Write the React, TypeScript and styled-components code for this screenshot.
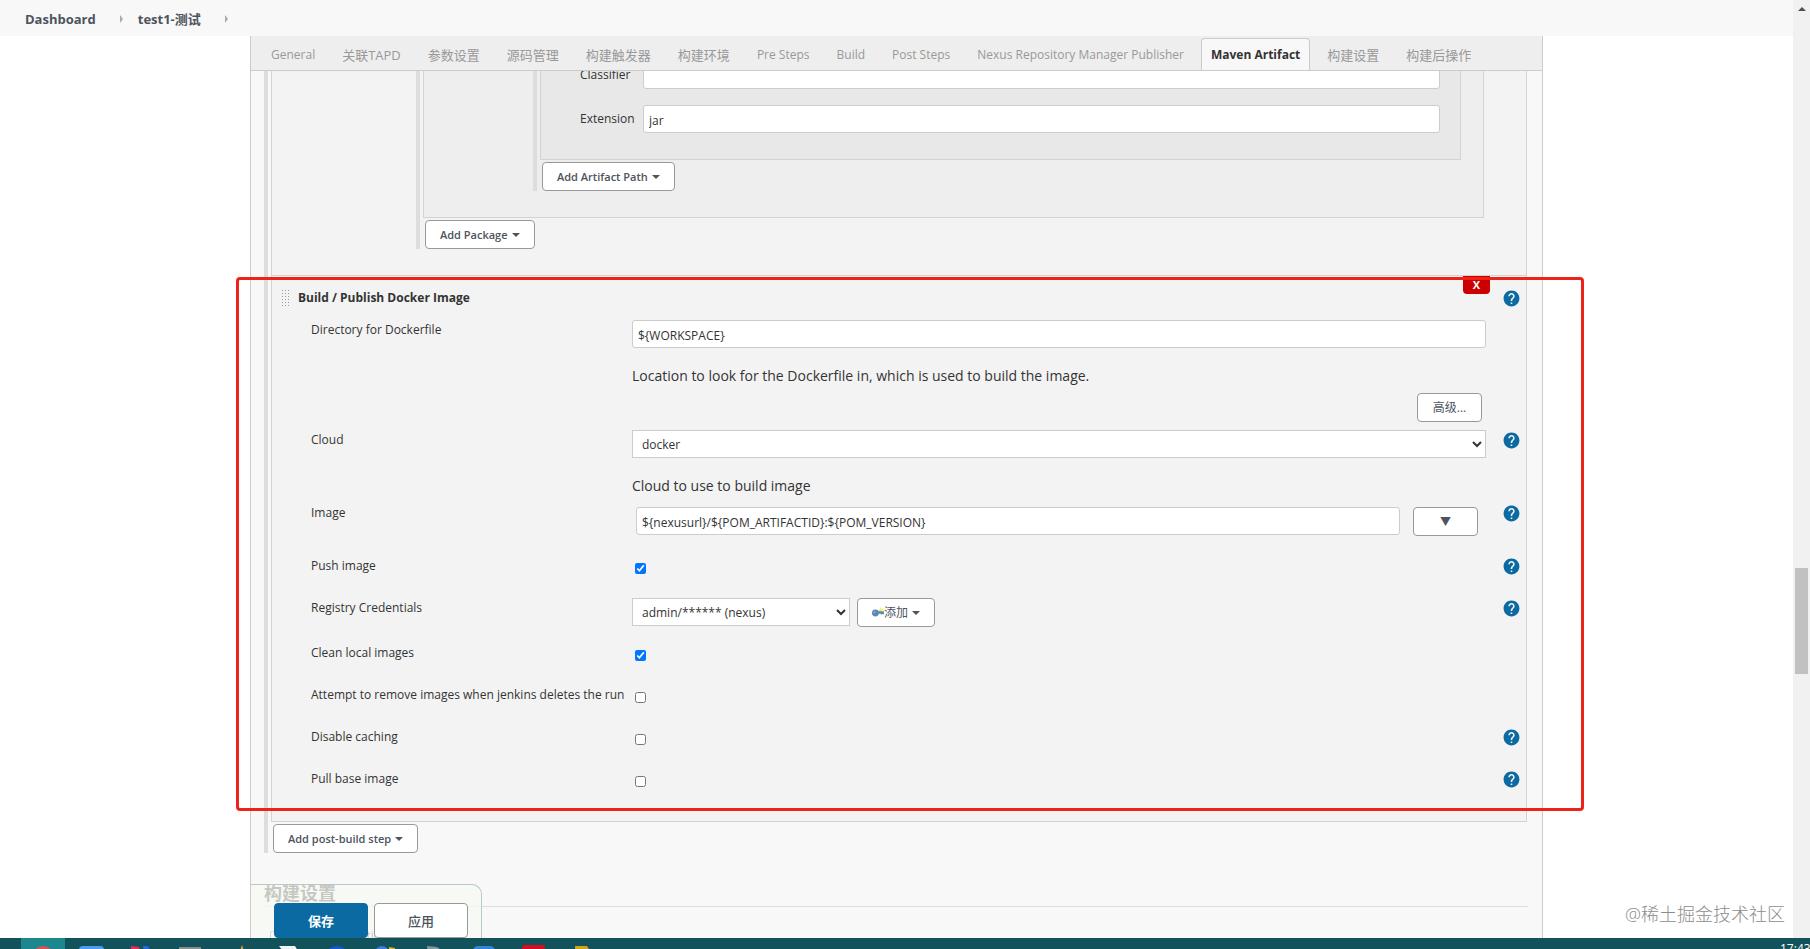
import React from 'react';
import styled, { createGlobalStyle, css } from 'styled-components';
import { MdHelp } from 'react-icons/md';

const GlobalStyle = createGlobalStyle`
  *, *::before, *::after { box-sizing: border-box; }
  body {
    margin: 0;
    background: #fff;
    color: #333;
    font: 12px/20px "Open Sans", "Noto Sans CJK SC", sans-serif;
  }
  button, input, select { font: inherit; color: inherit; }
`;

/* ---------- page frame ---------- */

const Screen = styled.div`
  display: flex;
  flex-direction: column;
  height: 100vh;
  overflow: hidden;
`;

const Browser = styled.div`
  display: flex;
  flex: 1;
  min-height: 0;
`;

const Page = styled.div`
  position: relative;
  display: flex;
  flex-direction: column;
  flex: 1;
  min-width: 0;
  overflow: hidden;
`;

const Breadcrumbs = styled.nav`
  position: relative;
  z-index: 2;
  display: flex;
  flex: none;
  align-items: center;
  height: 36px;
  padding: 2px 25px 0;
  background: #f8f8f8;
  font-size: 13px;
  font-weight: 700;
`;

const Crumb = styled.a`
  color: #4d545d;
  text-decoration: none;
`;

const CrumbArrow = styled.span`
  width: 0;
  margin: 0 15px 0 24px;
  border: solid transparent;
  border-width: 4px 0 4px 3px;
  border-left-color: #aaa;
`;

const ScrollTrack = styled.div`
  display: flex;
  flex: none;
  flex-direction: column;
  align-items: center;
  width: 17px;
  background: #f1f1f1;
`;

const ScrollUp = styled.span`
  margin: 7px 0 6px;
  border: solid transparent;
  border-width: 0 4px 4px;
  border-bottom-color: #505050;
`;

const TrackSpace = styled.div<{ $share: number }>`
  flex: ${(p) => p.$share};
`;

const ScrollThumb = styled.div`
  flex: 106;
  width: 13px;
  background: #c1c1c1;
`;

const Panel = styled.main`
  flex: 1;
  min-height: 0;
  margin: 0 250px;
  border: solid #ccc;
  border-width: 0 1px;
  background: #f8f8f8;
`;

/* ---------- tabs ---------- */

const TabBar = styled.div`
  position: relative;
  z-index: 1;
  display: flex;
  align-items: flex-end;
  gap: 7px;
  height: 35px;
  padding-left: 10px;
  border-bottom: 1px solid #ccc;
  background: #eee;
`;

const Tab = styled.button<{ $active?: boolean; $cjk?: boolean }>`
  height: 32px;
  padding: 0 9px;
  border: 1px solid transparent;
  border-bottom: 0;
  border-radius: 4px 4px 0 0;
  background: none;
  color: #999;
  font-size: ${(p) => (p.$cjk ? 13 : 12)}px;
  white-space: nowrap;
  ${(p) =>
    p.$active &&
    css`
      border-color: #ccc;
      background: #f8f8f8;
      color: #333;
      font-weight: 700;
    `}
`;

/* ---------- nested groups ---------- */

const Form = styled.form`
  margin-top: -10px;
`;

const Group = styled.div<{ $left: number; $right: number }>`
  margin: 0 ${(p) => p.$right}px 0 ${(p) => p.$left}px;
  padding-left: 3px;
  border-left: 4px solid #ddd;
`;

const Box = styled.section<{ $shade: string; $bottom: number }>`
  position: relative;
  padding-bottom: ${(p) => p.$bottom}px;
  border: solid #d3d3d3;
  border-width: 0 1px 1px;
  background: ${(p) => p.$shade};
`;

const AddButtonSlot = styled.div`
  display: flex;
  padding: 2px 0 0 2px;
`;

const Button = styled.button<{ $width?: number; $cjk?: boolean }>`
  display: flex;
  flex: none;
  align-items: center;
  justify-content: center;
  width: ${(p) => (p.$width ? `${p.$width}px` : 'auto')};
  height: 29px;
  padding: 0 14px;
  border: 1px solid #999;
  border-radius: 4px;
  background: #fff;
  color: #4d545d;
  font-size: ${(p) => (p.$cjk ? 12 : 11)}px;
  font-weight: ${(p) => (p.$cjk ? 400 : 600)};
  white-space: nowrap;
`;

const Caret = styled.span`
  margin-left: 4px;
  border: solid transparent;
  border-width: 4px 4px 0;
  border-top-color: currentColor;
`;

/* ---------- fields ---------- */

const fieldBox = css`
  height: 28px;
  border: 1px solid #ccc;
  background: #fff;
`;

const TextInput = styled.input`
  ${fieldBox}
  display: block;
  flex: 1;
  width: 100%;
  min-width: 0;
  padding: 2px 5px 0;
  border-radius: 3px;
`;

const Select = styled.select<{ $width?: number }>`
  ${fieldBox}
  display: block;
  width: ${(p) => (p.$width ? `${p.$width}px` : '100%')};
  padding: 0 5px;
`;

const ArtifactRow = styled.div`
  display: flex;
  align-items: center;
  margin-bottom: 16px;
  padding: 0 20px 0 39px;
`;

const ArtifactLabel = styled.label`
  width: 63px;
`;

const Row = styled.div<{ $height: number }>`
  display: flex;
  align-items: flex-start;
  min-height: ${(p) => p.$height}px;
  padding-left: 39px;
`;

const RowLabel = styled.label`
  flex: none;
  width: 321px;
  white-space: nowrap;
`;

const Control = styled.div`
  flex: 1;
  min-width: 0;
`;

const Help = styled.button`
  display: block;
  height: 20px;
  padding: 0;
  border: 0;
  background: none;
  color: #0b6aa2;
  svg { display: block; }
`;

const HelpCell = styled.div`
  display: flex;
  flex: none;
  justify-content: center;
  width: 40px;
  padding-left: 10px;
`;

const Checkbox = styled.input.attrs({ type: 'checkbox' })`
  display: block;
  width: 11px;
  height: 11px;
  margin: 7px 3px;
`;

const Description = styled.p`
  margin: 18px 0 0;
  font-size: 14px;
`;

const AdvancedSlot = styled.div`
  display: flex;
  justify-content: flex-end;
  padding: 7px 4px 8px;
`;

const ImageLine = styled.div`
  display: flex;
  align-items: flex-start;
  gap: 13px;
  padding: 4px 8px 0 4px;
`;

const CredentialsLine = styled.div`
  display: flex;
  gap: 7px;
`;

const StepHeader = styled.header`
  display: flex;
  align-items: flex-start;
  height: 44px;
  padding: 12px 0 0 9px;
`;

const StepTitle = styled.h3`
  flex: 1;
  margin: 0;
  font-size: 12px;
  font-weight: 700;
`;

const Grip = styled.span`
  width: 10px;
  height: 18px;
  margin: 1px 7px 0 0;
  background: radial-gradient(circle, #999 1px, transparent 1px) 0 0 / 3px 3px;
`;

const DeleteButton = styled.button`
  position: absolute;
  top: 0;
  right: 36px;
  width: 27px;
  height: 18px;
  padding: 0;
  border: 0;
  border-radius: 0 0 4px 4px;
  background: #c00;
  color: #fff;
  font-size: 11px;
  font-weight: 700;
  line-height: 18px;
`;

const Highlight = styled.div`
  position: absolute;
  z-index: 1;
  inset: 1px -58px 10px -36px;
  border: 3px solid #ec2318;
  border-radius: 4px;
  pointer-events: none;
`;

/* ---------- next section and sticky save bar ---------- */

const SectionHeading = styled.h2`
  margin: 28px 14px 0 13px;
  padding-bottom: 1px;
  border-bottom: 1px solid #ddd;
  font-size: 18px;
  font-weight: 700;
  line-height: 24px;
`;

const OptionLine = styled.label`
  display: flex;
  align-items: center;
  gap: 5px;
  margin: 19px 0 0 19px;
  input { margin: 0; }
`;

const SaveBar = styled.div`
  position: absolute;
  z-index: 1;
  bottom: 0;
  left: 251px;
  display: flex;
  gap: 6px;
  height: 54px;
  padding: 18px 13px 0 23px;
  overflow: hidden;
  border: solid #b3cdbf;
  border-width: 1px 1px 0 0;
  border-radius: 0 10px 0 0;
  background: rgba(247, 250, 243, 0.75);
`;

const SaveButton = styled.button<{ $primary?: boolean }>`
  flex: none;
  width: 94px;
  height: 35px;
  padding: 0;
  border: 1px solid ${(p) => (p.$primary ? '#0b6aa2' : '#999')};
  border-radius: 4px;
  background: ${(p) => (p.$primary ? '#0b6aa2' : '#fff')};
  color: ${(p) => (p.$primary ? '#fff' : '#4d545d')};
  font-size: 13px;
  font-weight: ${(p) => (p.$primary ? 700 : 500)};
`;

const Watermark = styled.div`
  position: absolute;
  right: 8px;
  bottom: 12px;
  color: #8c8c8c;
  font-size: 18px;
  font-weight: 300;
  line-height: 24px;
`;

/* ---------- taskbar ---------- */

const Taskbar = styled.footer`
  display: flex;
  flex: none;
  align-items: flex-start;
  height: 11px;
  padding-left: 21px;
  overflow: hidden;
  background: #12525a;
`;

const TaskItem = styled.button<{ $active?: boolean }>`
  flex: none;
  width: 44px;
  height: 35px;
  margin-right: 5px;
  padding: 7px 0 0;
  border: 0;
  background: ${(p) => (p.$active ? '#1e868f' : 'none')};
  svg { display: block; margin: 0 auto; }
`;

const Clock = styled.time`
  width: 30px;
  margin-left: auto;
  padding-top: 1px;
  color: #fff;
  font-size: 12px;
  white-space: nowrap;
`;

const tabs: { name: string; cjk?: boolean; active?: boolean }[] = [
  { name: 'General' },
  { name: '关联TAPD', cjk: true },
  { name: '参数设置', cjk: true },
  { name: '源码管理', cjk: true },
  { name: '构建触发器', cjk: true },
  { name: '构建环境', cjk: true },
  { name: 'Pre Steps' },
  { name: 'Build' },
  { name: 'Post Steps' },
  { name: 'Nexus Repository Manager Publisher' },
  { name: 'Maven Artifact', active: true },
  { name: '构建设置', cjk: true },
  { name: '构建后操作', cjk: true },
];

const taskIcons: React.ReactNode[] = [
  <circle cx="14" cy="12" r="11" fill="#d9534f" />,
  <rect x="1" y="1" width="25" height="24" rx="4" fill="#4a9df0" />,
  <>
    <path d="M4 1l8 1 4 21H5z" fill="#ee2a4f" />
    <path d="M16 1h5l3 6-6 10z" fill="#2463e8" />
  </>,
  <rect x="3" y="2" width="22" height="20" fill="#8b8b8b" />,
  <path d="M17 0l7 20H10z" fill="#e89b32" />,
  <>
    <path d="M5 1h16l3 5H9z" fill="#f3f3f3" />
    <path d="M8 6h16v16H8z" fill="#e9ecec" />
  </>,
  <circle cx="14" cy="13" r="12" fill="#1158d8" />,
  <>
    <circle cx="10" cy="8" r="7" fill="#3f78de" />
    <path d="M17 2l6 1v18h-5z" fill="#e5b521" />
  </>,
  <path d="M6 1l10 1 8 6-4 14H8z" fill="#85979b" />,
  <rect x="3" y="1" width="22" height="22" rx="5" fill="#2f86d9" />,
  <rect x="3" y="0" width="23" height="23" rx="3" fill="#d90d1f" />,
  <path d="M7 1h12l3 5-4 16H8z" fill="#cfa416" />,
];

function HelpIcon({ topic }: { topic: string }) {
  return (
    <HelpCell>
      <Help type="button" aria-label={`Help for feature: ${topic}`}>
        <MdHelp size={19} />
      </Help>
    </HelpCell>
  );
}

type FieldProps = {
  id: string;
  label: string;
  height: number;
  help?: boolean;
  children: React.ReactNode;
};

function Field({ id, label, height, help, children }: FieldProps) {
  return (
    <Row $height={height}>
      <RowLabel htmlFor={id}>{label}</RowLabel>
      <Control>{children}</Control>
      {help ? <HelpIcon topic={label} /> : <HelpCell />}
    </Row>
  );
}

function AddButton({ children }: { children: React.ReactNode }) {
  return (
    <AddButtonSlot>
      <Button type="button">
        {children}
        <Caret />
      </Button>
    </AddButtonSlot>
  );
}

function KeyIcon() {
  return (
    <svg width="14" height="14" viewBox="0 0 14 14" aria-hidden="true">
      <path d="M10 0l1 2 3 0-2 3 1 3-3-2-3 0 2-3z" fill="#f4ee6a" />
      <path d="M6 5h8v3l-1 1-1-1-1 1-1-1H6z" fill="#5f86b5" />
      <circle cx="4" cy="7" r="4" fill="#5d87b8" />
      <circle cx="3" cy="6" r="1" fill="#9dbbd9" />
    </svg>
  );
}

function PackageStep() {
  return (
    <Box $shade="#f3f3f3" $bottom={26}>
      <Group $left={144} $right={42}>
        <Box $shade="#eee" $bottom={26}>
          <Group $left={109} $right={22}>
            <Box $shade="#e8e8e8" $bottom={10}>
              <ArtifactRow>
                <ArtifactLabel htmlFor="classifier">Classifier</ArtifactLabel>
                <TextInput id="classifier" />
              </ArtifactRow>
              <ArtifactRow>
                <ArtifactLabel htmlFor="extension">Extension</ArtifactLabel>
                <TextInput id="extension" defaultValue="jar" />
              </ArtifactRow>
            </Box>
            <AddButton>Add Artifact Path</AddButton>
          </Group>
        </Box>
        <AddButton>Add Package</AddButton>
      </Group>
    </Box>
  );
}

function DockerStep() {
  return (
    <Box $shade="#f3f3f3" $bottom={8}>
      <StepHeader>
        <Grip />
        <StepTitle>Build / Publish Docker Image</StepTitle>
        <HelpIcon topic="Build / Publish Docker Image" />
      </StepHeader>
      <DeleteButton type="button">X</DeleteButton>

      <Field id="directory" label="Directory for Dockerfile" height={110}>
        <TextInput id="directory" defaultValue="${WORKSPACE}" />
        <Description>
          Location to look for the Dockerfile in, which is used to build the image.
        </Description>
        <AdvancedSlot>
          <Button type="button" $width={65} $cjk>高级...</Button>
        </AdvancedSlot>
      </Field>
      <Field id="cloud" label="Cloud" height={73} help>
        <Select id="cloud" defaultValue="docker">
          <option>docker</option>
        </Select>
        <Description>Cloud to use to build image</Description>
      </Field>
      <Field id="image" label="Image" height={53} help>
        <ImageLine>
          <TextInput
            id="image"
            defaultValue="${nexusurl}/${POM_ARTIFACTID}:${POM_VERSION}"
          />
          <Button type="button" $width={65}>▼</Button>
        </ImageLine>
      </Field>
      <Field id="push" label="Push image" height={42} help>
        <Checkbox id="push" defaultChecked />
      </Field>
      <Field id="credentials" label="Registry Credentials" height={45} help>
        <CredentialsLine>
          <Select id="credentials" $width={218}>
            <option>admin/****** (nexus)</option>
          </Select>
          <Button type="button" $width={78} $cjk>
            <KeyIcon />
            添加
            <Caret />
          </Button>
        </CredentialsLine>
      </Field>
      <Field id="clean" label="Clean local images" height={42}>
        <Checkbox id="clean" defaultChecked />
      </Field>
      <Field
        id="remove"
        label="Attempt to remove images when jenkins deletes the run"
        height={42}
      >
        <Checkbox id="remove" />
      </Field>
      <Field id="caching" label="Disable caching" height={42} help>
        <Checkbox id="caching" />
      </Field>
      <Field id="pull" label="Pull base image" height={44} help>
        <Checkbox id="pull" />
      </Field>
      <Highlight />
    </Box>
  );
}

export default function App() {
  return (
    <Screen>
      <GlobalStyle />
      <Browser>
        <Page>
          <Breadcrumbs>
            <Crumb href="#">Dashboard</Crumb>
            <CrumbArrow />
            <Crumb href="#">test1-测试</Crumb>
            <CrumbArrow />
          </Breadcrumbs>
          <Panel>
            <TabBar role="tablist">
              {tabs.map((t) => (
                <Tab
                  key={t.name}
                  type="button"
                  role="tab"
                  aria-selected={!!t.active}
                  $active={t.active}
                  $cjk={t.cjk}
                >
                  {t.name}
                </Tab>
              ))}
            </TabBar>
            <Form>
              <Group $left={13} $right={15}>
                <PackageStep />
                <DockerStep />
                <AddButton>Add post-build step</AddButton>
              </Group>
              <SectionHeading>构建设置</SectionHeading>
              <OptionLine>
                <Checkbox />
                E-mail Notification
              </OptionLine>
            </Form>
          </Panel>
          <SaveBar>
            <SaveButton type="submit" $primary>保存</SaveButton>
            <SaveButton type="button">应用</SaveButton>
          </SaveBar>
          <Watermark>@稀土掘金技术社区</Watermark>
        </Page>
        <ScrollTrack>
          <ScrollUp />
          <TrackSpace $share={551} />
          <ScrollThumb />
          <TrackSpace $share={264} />
        </ScrollTrack>
      </Browser>
      <Taskbar>
        {taskIcons.map((icon, i) => (
          <TaskItem key={i} type="button" $active={i === 0} aria-label={`Window ${i + 1}`}>
            <svg width="28" height="28" viewBox="0 0 28 28">{icon}</svg>
          </TaskItem>
        ))}
        <Clock>17:43</Clock>
      </Taskbar>
    </Screen>
  );
}
